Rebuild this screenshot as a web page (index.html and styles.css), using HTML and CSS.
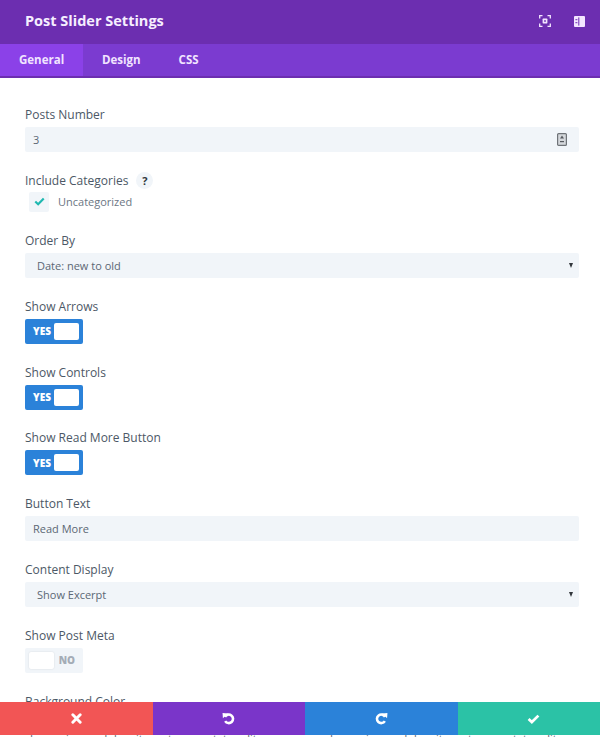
FILE: index.html
```html
<!DOCTYPE html>
<html lang="en">
<head>
<meta charset="utf-8">
<title>Post Slider Settings</title>
<link rel="stylesheet" href="styles.css">
</head>
<body>
<div class="modal">
  <header class="head">
    <h1 class="title">Post Slider Settings</h1>
    <div class="head-icons">
      <svg class="hicon" viewBox="0 0 12 12" width="12" height="12"><path d="M0.7 3.5V0.7H3.5M8.5 0.7H11.3V3.5M11.3 8.5V11.3H8.5M3.5 11.3H0.7V8.5" fill="none" stroke="#f3e6ff" stroke-width="1.3"/><rect x="3.6" y="3.6" width="4.8" height="4.8" rx="0.6" fill="#f3e6ff"/><rect x="5.2" y="5.2" width="1.6" height="1.6" fill="#6d2db3"/></svg>
      <svg class="hicon" viewBox="0 0 11 11" width="11" height="11"><path d="M0 1a1 1 0 0 1 1-1h9a1 1 0 0 1 1 1v9a1 1 0 0 1-1 1H1a1 1 0 0 1-1-1z" fill="#f3e6ff"/><rect x="4.3" y="1.4" width="1" height="8.2" fill="#6d2db3"/><rect x="1.4" y="3.2" width="2" height="1" fill="#6d2db3"/><rect x="1.4" y="6.2" width="2" height="1" fill="#6d2db3"/></svg>
    </div>
  </header>
  <nav class="tabs">
    <span class="tab tab-on">General</span>
    <span class="tab">Design</span>
    <span class="tab">CSS</span>
  </nav>
  <main class="body">
    <div class="field">
      <div class="label">Posts Number</div>
      <div class="input">3
        <svg class="num-icon" viewBox="0 0 10 13" width="10" height="13"><rect x="0.6" y="0.6" width="8.8" height="11.8" rx="1" fill="#d5d8dc" stroke="#6f7378" stroke-width="1.2"/><path d="M5 2.5 7 5.5H3z" fill="#55595e"/><rect x="3" y="8" width="4" height="1.2" fill="#55595e"/></svg>
      </div>
    </div>
    <div class="field field-cat">
      <div class="label label-help">Include Categories <span class="help">?</span></div>
      <div class="check-row">
        <span class="check"><svg viewBox="0 0 12 10" width="11" height="9"><path d="M1.3 5 4.5 8 10.7 1.6" fill="none" stroke="#1fb8b0" stroke-width="2.4"/></svg></span>
        <span class="check-text">Uncategorized</span>
      </div>
    </div>
    <div class="field">
      <div class="label">Order By</div>
      <div class="input input-sel">Date: new to old<span class="arrow"></span></div>
    </div>
    <div class="field">
      <div class="label">Show Arrows</div>
      <div class="toggle"><span class="yes">YES</span><span class="knob"></span></div>
    </div>
    <div class="field">
      <div class="label">Show Controls</div>
      <div class="toggle"><span class="yes">YES</span><span class="knob"></span></div>
    </div>
    <div class="field">
      <div class="label">Show Read More Button</div>
      <div class="toggle"><span class="yes">YES</span><span class="knob"></span></div>
    </div>
    <div class="field">
      <div class="label">Button Text</div>
      <div class="input input-text">Read More</div>
    </div>
    <div class="field">
      <div class="label">Content Display</div>
      <div class="input input-sel">Show Excerpt<span class="arrow"></span></div>
    </div>
    <div class="field">
      <div class="label">Show Post Meta</div>
      <div class="toggle toggle-off"><span class="knob"></span><span class="no">NO</span></div>
    </div>
    <div class="field">
      <div class="label">Background Color</div>
    </div>
  </main>
  <footer class="actions">
    <span class="act act-red"><svg viewBox="0 0 12 12" width="11" height="11"><path d="M2 2 10 10M10 2 2 10" stroke="#fff" stroke-width="3.2" stroke-linecap="round"/></svg></span>
    <span class="act act-purple"><svg viewBox="0 0 14 14" width="13" height="13"><path d="M3.2 5.2A4.6 4.6 0 1 1 3.4 9.8" fill="none" stroke="#fff" stroke-width="2.8"/><path d="M0.6 1.2 6.4 1.6 1 6.8z" fill="#fff"/></svg></span>
    <span class="act act-blue"><svg viewBox="0 0 14 14" width="13" height="13"><path d="M10.8 5.2A4.6 4.6 0 1 0 10.6 9.8" fill="none" stroke="#fff" stroke-width="2.8"/><path d="M13.4 1.2 7.6 1.6 13 6.8z" fill="#fff"/></svg></span>
    <span class="act act-green"><svg viewBox="0 0 14 11" width="13" height="10"><path d="M1.6 5.4 5.2 8.8 12.4 1.8" fill="none" stroke="#fff" stroke-width="3"/></svg></span>
  </footer>
  <div class="peek">
    <span class="peek-text">Lorem ipsum dolor sit amet, consectetur elit</span>
    <span class="peek-text">Lorem ipsum dolor sit amet, consectetur elit</span>
  </div>
</div>
</body>
</html>
```
FILE: styles.css
```css
* { box-sizing: border-box; }
html, body { margin: 0; padding: 0; background: #fff; }
body { width: 600px; height: 737px; overflow: hidden; font-family: "Open Sans", "Liberation Sans", sans-serif; color: #4c5866; }
.modal { position: relative; width: 600px; height: 737px; overflow: hidden; }
.head { height: 44px; background: #6c2eb0; display: flex; align-items: center; justify-content: space-between; padding: 0 15px 2px 25px; }
.title { margin: 0; font-size: 14.5px; font-weight: 700; color: #f6eeff; line-height: 20px; }
.head-icons { display: flex; align-items: center; gap: 23px; }
.hicon { display: block; }
.tabs { height: 34px; background: #7b3bd0; border-bottom: 2px solid #6c2eb0; display: flex; }
.tab { font-size: 11.5px; font-weight: 700; color: #f1e4ff; padding: 0 19px; line-height: 32px; }
.tab-on { background: #8b41e8; width: 83px; }
.body { padding: 28px 21px 0 25px; }
.field { margin-bottom: 19.8px; }
.field-cat { margin-bottom: 20.2px; }
.label { font-size: 12px; font-weight: 400; line-height: 17px; margin-bottom: 4px; color: #4c5866; }
.label-help { display: flex; align-items: center; gap: 8px; margin-bottom: 3px; }
.help { width: 17px; height: 17px; border-radius: 50%; background: #f1f5f9; color: #32373c; font-size: 11px; font-weight: 700; text-align: center; line-height: 17px; }
.input { position: relative; height: 25px; background: #f1f5f9; border-radius: 2px; font-size: 11px; line-height: 25px; padding: 0 8px; font-weight: 500; color: #5b6774; display: flex; align-items: center; justify-content: space-between; }
.input-sel { padding: 0 6px 0 12px; }
.input-text { padding-left: 8px; }
.num-icon { display: block; margin-right: 4px; }
.arrow { width: 0; height: 0; border-left: 2.5px solid transparent; border-right: 2.5px solid transparent; border-top: 5px solid #32373c; }
.check-row { display: flex; align-items: center; gap: 9px; padding-left: 4px; }
.check { width: 20px; height: 20px; background: #f1f5f9; border-radius: 2px; display: flex; align-items: center; justify-content: center; }
.check-text { font-size: 11px; font-weight: 500; color: #6b7683; }
.toggle { width: 58px; height: 25px; background: #2b82d9; border-radius: 2px; display: flex; align-items: center; justify-content: space-between; padding: 0 4px 0 8px; }
.yes { font-size: 10px; font-weight: 800; color: #fff; }
.knob { width: 25px; height: 17px; background: #fff; border-radius: 2px; }
.toggle-off { background: #f1f5f9; padding: 0 8px 0 4px; }
.no { font-size: 10px; font-weight: 800; color: #a4acb6; }
.toggle-off .knob { box-shadow: 0 0 2px rgba(0,0,0,0.12); }
.actions { position: absolute; left: 0; top: 702px; width: 612px; height: 33px; display: flex; }
.act { width: 152.5px; display: flex; align-items: center; justify-content: center; }
.act-red { background: #f25555; }
.act-purple { background: #7a35c9; }
.act-blue { background: #2b82d9; }
.act-green { background: #2bc2a6; }
.peek { position: absolute; left: 0; top: 735px; width: 600px; height: 2px; overflow: hidden; display: flex; background: #fff; }
.peek-text { width: 300px; padding-left: 30px; font-size: 11px; line-height: 8px; color: #5b6774; white-space: nowrap; }
```
